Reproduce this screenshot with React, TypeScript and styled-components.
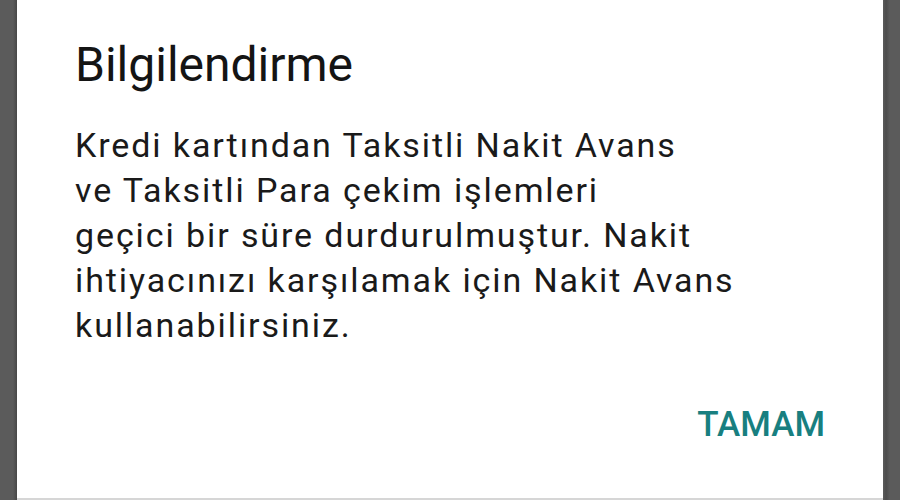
import React from 'react';
import styled, {createGlobalStyle} from 'styled-components';

const GlobalStyle = createGlobalStyle`
    html, body {
        margin: 0;
        padding: 0;
        background: #585858;
        overflow: hidden;
    }
    #root {
        height: 500px;
    }
`;

const Screen = styled.div`
    display: flex;
    height: 500px;
    padding: 0 17px;
    box-sizing: border-box;
    background: linear-gradient(to right, #5b5b5b 0, #5b5b5b 13px, #474747 17px, #5b5b5b 17px,
        #5b5b5b 883px, #4c4c4c 886px, #5b5b5b 890px);
`;

const Dialog = styled.div`
    flex: 1;
    display: flex;
    flex-direction: column;
    height: 100%;
    box-sizing: border-box;
    background: #ffffff;
    border-bottom: 2px solid #d6d6d6;
    padding: 38px 58px 0 58px;
    font-family: Roboto, "Noto Sans", sans-serif;
`;

const Title = styled.h1`
    margin: 0;
    font-size: 48px;
    font-weight: 400;
    line-height: 54px;
    color: #141414;
`;

const Message = styled.p`
    margin: 31px 0 0 0;
    font-size: 34px;
    line-height: 45px;
    letter-spacing: 1.9px;
    color: #1a1a1a;
`;

const Actions = styled.div`
    display: flex;
    justify-content: flex-end;
    margin-top: 56px;
`;

const TextButton = styled.button`
    border: none;
    background: none;
    padding: 0;
    font-family: Roboto, sans-serif;
    font-size: 35px;
    line-height: 41px;
    font-weight: 500;
    color: #187f80;
    cursor: pointer;
`;

const lines = [
    'Kredi kartından Taksitli Nakit Avans',
    've Taksitli Para çekim işlemleri',
    'geçici bir süre durdurulmuştur. Nakit',
    'ihtiyacınızı karşılamak için Nakit Avans',
    'kullanabilirsiniz.',
];

const App: React.FC = () => {
    return (
        <>
            <GlobalStyle/>
            <Screen>
                <Dialog>
                    <Title>Bilgilendirme</Title>
                    <Message>
                        {lines.map((line, i) => (
                            <React.Fragment key={i}>
                                {line}
                                {i < lines.length - 1 && <br/>}
                            </React.Fragment>
                        ))}
                    </Message>
                    <Actions>
                        <TextButton>TAMAM</TextButton>
                    </Actions>
                </Dialog>
            </Screen>
        </>
    );
};

export default App;
